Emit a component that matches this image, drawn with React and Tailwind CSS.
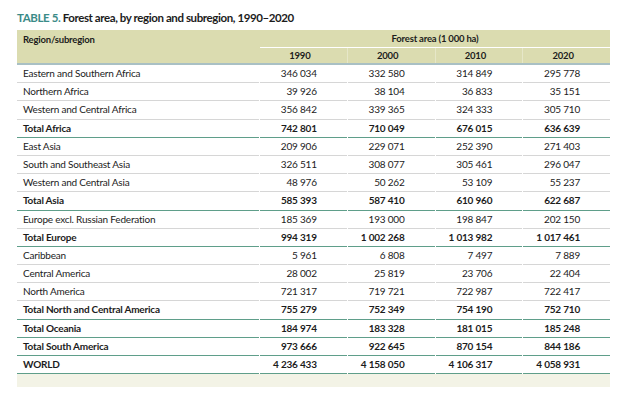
import React from "react";

const rows = [
  ["Eastern and Southern Africa", "346 034", "332 580", "314 849", "295 778"],
  ["Northern Africa", "39 926", "38 104", "36 833", "35 151"],
  ["Western and Central Africa", "356 842", "339 365", "324 333", "305 710"],
  ["Total Africa", "742 801", "710 049", "676 015", "636 639", true],
  ["East Asia", "209 906", "229 071", "252 390", "271 403"],
  ["South and Southeast Asia", "326 511", "308 077", "305 461", "296 047"],
  ["Western and Central Asia", "48 976", "50 262", "53 109", "55 237"],
  ["Total Asia", "585 393", "587 410", "610 960", "622 687", true],
  ["Europe excl. Russian Federation", "185 369", "193 000", "198 847", "202 150"],
  ["Total Europe", "994 319", "1 002 268", "1 013 982", "1 017 461", true],
  ["Caribbean", "5 961", "6 808", "7 497", "7 889"],
  ["Central America", "28 002", "25 819", "23 706", "22 404"],
  ["North America", "721 317", "719 721", "722 987", "722 417"],
  ["Total North and Central America", "755 279", "752 349", "754 190", "752 710", true],
  ["Total Oceania", "184 974", "183 328", "181 015", "185 248", true],
  ["Total South America", "973 666", "922 645", "870 154", "844 186", true],
  ["WORLD", "4 236 433", "4 158 050", "4 106 317", "4 058 931", true],
];

export default function App() {
  return (
    <div className="w-[637px] h-[402px] bg-white pl-[17px] pt-[10px] text-[#1c1c1c] font-['Lato',sans-serif]">
      <h1 className="text-[11.5px] font-bold leading-[16px] h-[20px] tracking-[-0.4px]">
        <span className="text-[#3b8b88]">TABLE 5.</span> Forest area, by region and subregion, 1990–2020
      </h1>

      <div className="w-[593px]">
        {/* Header */}
        <div className="bg-[#dbdcb0] border-b-2 border-[#a9c0c4] grid grid-cols-[242px_1fr_1fr_1fr_1fr] gap-x-px text-[9.5px] font-bold tracking-[-0.2px]">
          <div className="row-span-2 pl-[6px] pt-[4px] leading-[12px]">Region/subregion</div>
          <div className="col-span-4 h-[18px] border-b border-white text-center leading-[17px]">
            Forest area (1 000 ha)
          </div>
          {["1990", "2000", "2010", "2020"].map((y, i) => (
            <div
              key={y}
              className={`h-[15px] leading-[15px] text-center pr-[7px] ${i > 0 ? "border-l border-[#e6e7c8] -ml-px" : ""}`}
            >
              {y}
            </div>
          ))}
        </div>

        {/* Body */}
        {rows.map((r) => {
          const total = r[5];
          return (
            <div
              key={r[0]}
              className={`grid grid-cols-[242px_1fr_1fr_1fr_1fr] gap-x-px text-[10px] tracking-[-0.2px] ${total ? "font-bold" : ""}`}
            >
              {r.slice(0, 5).map((c, i) => (
                <div
                  key={i}
                  className={`h-[18.2px] leading-[17px] border-b ${
                    total ? "border-[#5f9e8a]" : "border-[#d6d6d6]"
                  } ${i === 0 ? "pl-[6px]" : "text-right pr-[30px]"}`}
                >
                  {c}
                </div>
              ))}
            </div>
          );
        })}

        {/* Footer band */}
        <div className="h-[13px] bg-[#f3f3e6]" />
      </div>
    </div>
  );
}
